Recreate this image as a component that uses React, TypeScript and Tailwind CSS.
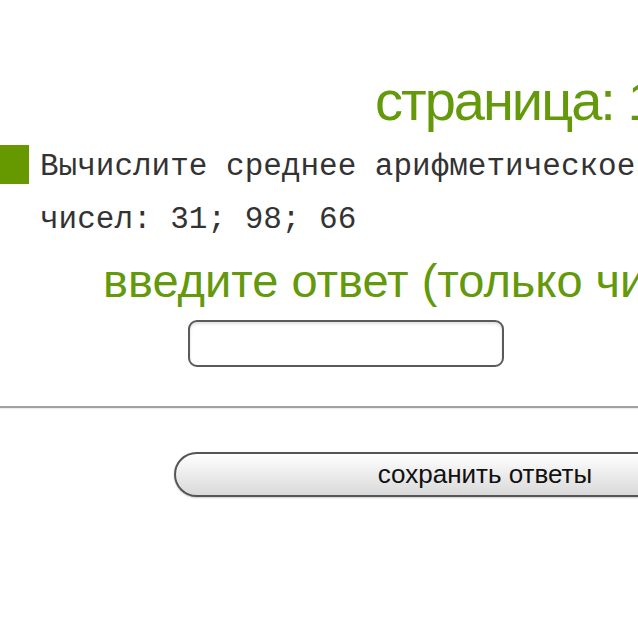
export default function App() {
  return (
    <div className="w-[638px] h-[640px] overflow-hidden bg-white">
      <div className="w-[1000px] flex flex-col">
        <div
          className="pl-[375px] pt-[73px] text-[56px] leading-none text-[#63990a] tracking-[-2px]"
          style={{ fontFamily: '"Liberation Sans", Arial, sans-serif' }}
        >
          страница: 1
        </div>

        <div className="flex items-start mt-[11px]">
          <div className="w-[29px] h-[39px] mt-[5px] bg-[#669900] shrink-0"></div>
          <div
            className="ml-[11px] text-[31px] leading-[53px] text-[#333333]"
            style={{ fontFamily: '"Liberation Mono", "Courier New", monospace' }}
          >
            <div>Вычислите среднее арифметическое трех</div>
            <div>чисел: 31; 98; 66</div>
          </div>
        </div>

        <div
          className="pl-[103px] mt-[11px] text-[47px] leading-none text-[#63990a]"
          style={{ fontFamily: '"Liberation Sans", Arial, sans-serif' }}
        >
          введите ответ (только числа)
        </div>

        <input
          type="text"
          className="ml-[188px] mt-[16px] w-[316px] h-[47px] rounded-[9px] border-2 border-[#5a5a5a] bg-white shadow-[inset_0_2px_3px_rgba(0,0,0,0.12)] outline-none"
        />

        <div className="mt-[39px] border-t-2 border-[#a0a0a0] shadow-[0_1px_1px_rgba(0,0,0,0.08)]"></div>

        <button
          type="button"
          className="ml-[174px] mt-[44px] w-[622px] h-[45px] rounded-full border-2 border-[#555555] bg-gradient-to-b from-white to-[#d9d9d9] shadow-[0_1px_2px_rgba(0,0,0,0.2)] text-[26px] text-[#111111] flex items-center justify-center"
          style={{ fontFamily: '"Liberation Sans", Arial, sans-serif' }}
        >
          сохранить ответы
        </button>
      </div>
    </div>
  );
}
